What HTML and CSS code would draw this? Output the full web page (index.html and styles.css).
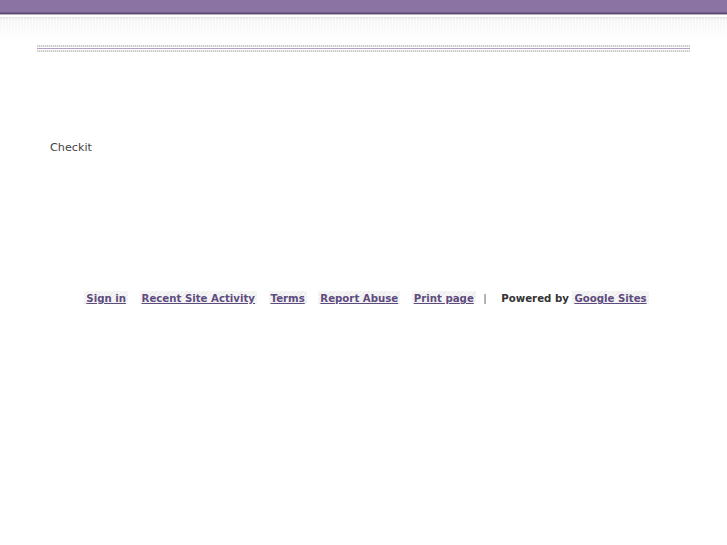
FILE: index.html
```html
<!DOCTYPE html>
<html>
<head>
<meta charset="utf-8">
<link rel="stylesheet" href="styles.css">
</head>
<body>
<div class="topbar"></div>
<div class="topshade"></div>
<div class="page">
  <div class="rule">
    <div class="dots"></div>
    <div class="line"></div>
    <div class="dots"></div>
  </div>
  <div class="content">Checkit</div>
</div>
<div class="footer">
  <a class="lnk" href="#">Sign in</a>
  <a class="lnk" href="#">Recent Site Activity</a>
  <a class="lnk" href="#">Terms</a>
  <a class="lnk" href="#">Report Abuse</a>
  <a class="lnk" href="#">Print page</a>
  <span class="sep">|</span>
  <span class="pow">Powered by</span>
  <a class="lnk gs" href="#">Google Sites</a>
</div>
</body>
</html>
```
FILE: styles.css
```css
html, body { margin: 0; padding: 0; background: #fff; }
body { font-family: "DejaVu Sans", sans-serif; color: #444; }
.topbar {
  height: 12px;
  background: #8b74a3;
  border-bottom: 1px solid #6f5b88;
  box-shadow: 0 1px 0 #5b4b70, 0 2px 0 #b9b0c2;
}
.topshade {
  height: 24px;
  margin-top: 4px;
  background:
    repeating-linear-gradient(90deg, rgba(255,255,255,0.0) 0 2px, rgba(255,255,255,0.6) 2px 3px),
    linear-gradient(180deg, #dddde0 0, #e8e8ea 1px, #f6f6f6 3px, #fbfbfb 14px, #fff 24px);
}
.page { padding: 0 37px; }
.rule { margin-top: 4px; display: flex; flex-direction: column; gap: 1px; }
.dots {
  height: 2px;
  background: repeating-linear-gradient(90deg, #c9c9c9 0 1px, #eee 1px 2px);
}
.line { height: 1px; background: #b39fc8; margin: 0; }
.content {
  padding: 89px 0 0 13px;
  font-size: 11.2px;
  color: #444;
  height: 147px;
}
.footer {
  margin-top: 5px;
  text-align: center;
  font-size: 10.2px;
  font-weight: bold;
  padding-left: 6px;
}
.lnk {
  color: #5e4c7f;
  text-decoration: underline;
  padding: 2px 2px 3px;
  margin: 0 4px;
  background: repeating-linear-gradient(135deg, #ececec 0 1px, #f7f7f7 1px 3px);
}
.sep { color: #555; font-weight: normal; margin: 0 11px 0 0; }
.pow { color: #333; }
.gs { margin-left: 0; }
```
